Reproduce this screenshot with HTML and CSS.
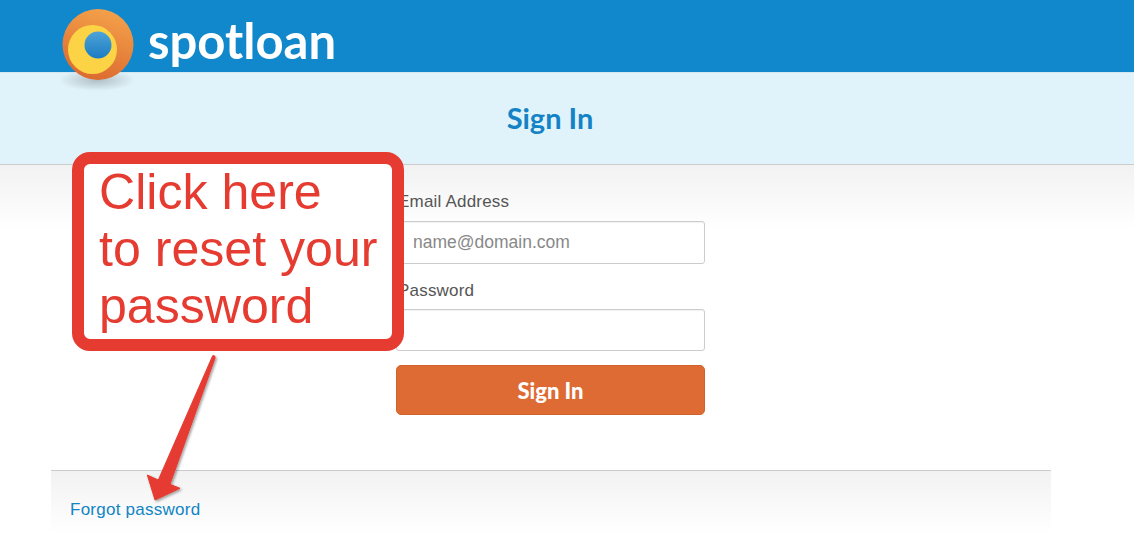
FILE: index.html
```html
<!DOCTYPE html>
<html lang="en">
<head>
<meta charset="utf-8">
<title>Spotloan Sign In</title>
<link rel="stylesheet" href="styles.css">
</head>
<body>
<header class="topbar">
  <div class="brand">spotloan</div>
</header>
<svg class="logo" width="100" height="100" viewBox="0 0 100 100" aria-hidden="true">
  <defs>
    <radialGradient id="shadow" cx="50%" cy="50%" r="50%">
      <stop offset="0" stop-color="#000" stop-opacity=".22"/>
      <stop offset="1" stop-color="#000" stop-opacity="0"/>
    </radialGradient>
    <linearGradient id="orange" x1="0.7" y1="0" x2="0.4" y2="1">
      <stop offset="0" stop-color="#f4a24a"/>
      <stop offset="1" stop-color="#dc6a30"/>
    </linearGradient>
    <linearGradient id="blue" x1="0.5" y1="0" x2="0.5" y2="1">
      <stop offset="0" stop-color="#4ea3d8"/>
      <stop offset="1" stop-color="#1c7cc2"/>
    </linearGradient>
  </defs>
  <ellipse cx="47" cy="80" rx="38" ry="11" fill="url(#shadow)"/>
  <circle cx="48" cy="44.500" r="35.500" fill="url(#orange)"/>
  <circle cx="42.500" cy="49.500" r="24.500" fill="#fbd345"/>
  <circle cx="48" cy="45" r="13.500" fill="url(#blue)"/>
</svg>
<section class="banner"><h1>Sign In</h1></section>
<main class="content">
  <form class="signin">
    <label class="field-label" for="email">Email Address</label>
    <input class="field" id="email" type="text" placeholder="name@domain.com">
    <label class="field-label" for="password">Password</label>
    <input class="field" id="password" type="password">
    <button class="submit" type="button">Sign In</button>
  </form>
</main>
<footer class="foot"><a href="#">Forgot password</a></footer>
<div class="callout">Click here<br>to reset your<br>password</div>
<svg class="arrow" width="90" height="160" viewBox="0 0 90 160" aria-hidden="true">
  <defs>
    <filter id="arrowShadow" x="-20%" y="-10%" width="150%" height="125%">
      <feDropShadow dx="1.500" dy="1.500" stdDeviation="0.800" flood-color="#000" flood-opacity=".35"/>
    </filter>
  </defs>
  <path d="M72.700 6.700 C74 5.800 75.600 7.300 75 9.300 L30 135.300 L40 139.300 L15 151 L7.300 126 L18.300 131 Z" fill="#e53b30" stroke="#e53b30" stroke-width="1" stroke-linejoin="round" filter="url(#arrowShadow)"/>
</svg>
</body>
</html>
```
FILE: styles.css
```css
* { box-sizing: border-box; }
html, body { margin: 0; padding: 0; }
body {
  height: 533px;
  overflow: hidden;
  background: #fff;
  font-family: "Liberation Sans", Arial, sans-serif;
  position: relative;
}
.topbar {
  height: 72px;
  background: #1188cb;
  padding-left: 148px;
}
.brand {
  font-family: "Lato", sans-serif;
  font-weight: 700;
  font-size: 49px;
  line-height: 80px;
  color: #fff;
}
.logo {
  position: absolute;
  left: 50px;
  top: 0;
}
.banner {
  height: 93px;
  padding-right: 34px;
  background: #e0f3fa;
  border-top: 1px solid #d5e6ee;
  border-bottom: 1px solid #ccc;
  display: flex;
  justify-content: center;
}
.banner h1 {
  margin: 0;
  font-family: "Lato", sans-serif;
  font-weight: 700;
  font-size: 29px;
  line-height: 90px;
  color: #1483c6;
}
.content {
  height: 305px;
  padding: 26px 0 0 396px;
  background: linear-gradient(#f2f2f2, #fff 65px);
}
.signin {
  width: 309px;
  display: flex;
  flex-direction: column;
}
.field-label {
  font-size: 17px;
  letter-spacing: 0.2px;
  line-height: 22px;
  color: #555;
  padding-left: 2px;
  margin-bottom: 8px;
}
.field {
  height: 43px;
  margin-bottom: 16px;
  padding: 0 16px;
  font: 17.500px "Liberation Sans", Arial, sans-serif;
  background: #fff;
  border: 1px solid #ccc;
  border-radius: 3px;
  box-shadow: inset 0 1px 1px rgba(0, 0, 0, .06);
}
.field + .field-label { margin-bottom: 7px; }
#password { height: 42px; margin-bottom: 14px; }
.field::placeholder { color: #888; opacity: 1; }
.submit {
  height: 50px;
  padding: 1px 0 0;
  background: #dd6b33;
  border: 1px solid #d2622c;
  border-radius: 5px;
  color: #fff;
  font-family: "Lato", sans-serif;
  font-weight: 900;
  font-size: 22px;
}
.foot {
  height: 64px;
  margin: 0 83px 0 51px;
  padding: 28px 0 0 19px;
  border-top: 1px solid #ccc;
  background: linear-gradient(#f2f2f2, #fff);
  font-size: 17px;
  letter-spacing: 0.25px;
  line-height: 22px;
}
.foot a { color: #1184c4; text-decoration: none; }
.callout {
  position: absolute;
  left: 72px;
  top: 152px;
  width: 332px;
  height: 199px;
  padding: 0 0 0 15px;
  background: #fff;
  border: 12px solid #e53b30;
  border-radius: 18px;
  color: #e53b30;
  font-size: 50.100px;
  line-height: 57px;
  white-space: nowrap;
}
.arrow {
  position: absolute;
  left: 140px;
  top: 349px;
}
```
